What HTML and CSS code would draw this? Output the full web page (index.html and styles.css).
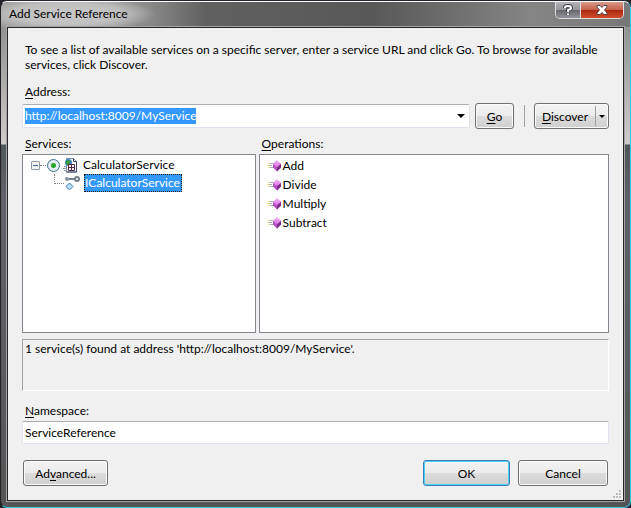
FILE: index.html
```
<!DOCTYPE html>
<html lang="en">
<head>
<meta charset="utf-8">
<title>Add Service Reference</title>
<link rel="stylesheet" href="styles.css">
</head>
<body>
<svg class="defs" aria-hidden="true">
  <defs>
    <linearGradient id="gemTop" x1="0" y1="0" x2="0" y2="1"><stop offset="0" stop-color="#f4b4f8"/><stop offset="1" stop-color="#d66be0"/></linearGradient>
    <symbol id="method" viewBox="0 0 15 12">
      <path d="M2 3.500h4M1 5.500h4M2 7.500h4" stroke="#a9a9b4"/>
      <path d="M1 3.500h2M0 5.500h2M1 7.500h2" stroke="#ece28a"/>
      <path d="M10 0.500L14 4v3.500L10 11.500L6 7.500V4z" fill="#b44fc0"/>
      <path d="M10 0.500L14 4L10 7.500L6 4z" fill="url(#gemTop)"/>
      <path d="M10 7.500L14 4v3.500L10 11.500z" fill="#7c2b88"/>
    </symbol>
  </defs>
</svg>
<main class="window">
  <header class="titlebar">
    <h1 class="title">Add Service Reference</h1>
    <div class="caption-buttons">
      <button class="caption help" aria-label="Help"><svg viewBox="0 0 12 12" width="12" height="12"><path d="M3 4V3.500Q3 2 6 2T9 4Q9 5.500 6 6V8M6 9.500V11" fill="none" stroke="#41434b" stroke-width="4"/><path d="M3 4V3.500Q3 2 6 2T9 4Q9 5.500 6 6V8M6 9.500V11" fill="none" stroke="#fff" stroke-width="2"/></svg></button>
      <button class="caption close" aria-label="Close"><svg viewBox="0 0 12 10" width="12" height="10"><path d="M1 .5h3L6 2.500L8 .5h3V2L8.500 5L11 8v1.500H8L6 7.500L4 9.500H1V8L3.500 5L1 2z" fill="#fff" stroke="#55494d"/></svg></button>
    </div>
  </header>
  <form class="content">
    <p class="intro">To see a list of available services on a specific server, enter a service URL and click Go. To browse for available services, click Discover.</p>
    <label class="label" for="address"><u>A</u>ddress:</label>
    <div class="address-row">
      <div class="combo">
        <input id="address" class="combo-input" type="text" value="http://localhost:8009/MyService" autofocus>
        <button type="button" class="combo-arrow" aria-label="Show addresses"><i class="arrow"></i></button>
      </div>
      <button type="button" class="button go"><span><u>G</u>o</span></button>
      <span class="separator"></span>
      <div class="split">
        <button type="button" class="split-main"><span><u>D</u>iscover</span></button>
        <button type="button" class="split-arrow" aria-label="Discover options"><i class="arrow small"></i></button>
      </div>
    </div>
    <div class="lists">
      <section class="pane">
        <h2 class="label"><span><u>S</u>ervices:</span></h2>
        <div class="box tree">
          <div class="node">
            <button type="button" class="expander" aria-label="Collapse"></button>
            <span class="dots"></span>
            <input class="radio" type="radio" id="calc" name="service" checked>
            <svg class="service-icon" viewBox="0 0 15 15" width="15" height="15">
              <path d="M3.500 .5h7l3 3v10.500h-10z" fill="#fff" stroke="#7d89a8"/>
              <path d="M10.500 .5v3h3M13.500 4v10h-10" fill="none" stroke="#35456f"/>
              <circle cx="5.500" cy="4.500" r="3.500" fill="#4380bd"/>
              <path d="M3 3l3-1 2 2-2 1-1 3-2-2z" fill="#369c3b"/>
              <path d="M5.500 6.500h6v6h-6zM8.500 6.500v6M5.500 9.500h6" fill="#fff" stroke="#5a233e"/>
              <path d="M1 8.500h3M0 10.500h4M1 12.500h3" stroke="#8fa1b5"/>
            </svg>
            <label class="node-text" for="calc">CalculatorService</label>
          </div>
          <div class="node child">
            <span class="elbow"></span>
            <svg class="interface-icon" viewBox="0 0 15 15" width="15" height="15">
              <path d="M2 3h9" stroke="#777f8a" stroke-width="2"/><circle cx="2" cy="3" r="2" fill="#8a929c"/>
              <circle cx="12" cy="3" r="2" fill="#fff" stroke="#777f8a" stroke-width="2"/>
              <path d="M4.500 7L8 10.500L4.500 14L1 10.500z" fill="#b4e0fa" stroke="#3b76ae"/>
            </svg>
            <span class="node-text selected">ICalculatorService</span>
          </div>
        </div>
      </section>
      <section class="pane">
        <h2 class="label"><span><u>O</u>perations:</span></h2>
        <ul class="box operations">
          <li><svg width="15" height="12"><use href="#method"/></svg>Add</li>
          <li><svg width="15" height="12"><use href="#method"/></svg>Divide</li>
          <li><svg width="15" height="12"><use href="#method"/></svg>Multiply</li>
          <li><svg width="15" height="12"><use href="#method"/></svg>Subtract</li>
        </ul>
      </section>
    </div>
    <div class="status" role="status">1 service(s) found at address 'http://localhost:8009/MyService'.</div>
    <label class="label" for="namespace"><u>N</u>amespace:</label>
    <input id="namespace" class="field" type="text" value="ServiceReference">
    <div class="actions">
      <button type="button" class="button advanced"><span>Ad<u>v</u>anced...</span></button>
      <button type="button" class="button ok">OK</button>
      <button type="button" class="button cancel">Cancel</button>
    </div>
    <svg class="grip" viewBox="0 0 8 8" width="8" height="8"><path d="M6 0h2v2H6zM3 3h2v2H3zM6 3h2v2H6zM0 6h2v2H0zM3 6h2v2H3zM6 6h2v2H6z" fill="#bdbdbd"/></svg>
  </form>
</main>
<script src="script.js"></script>
</body>
</html>
```
FILE: styles.css
```
* { box-sizing: border-box; }
body, h1, h2, p, ul { margin: 0; padding: 0; font-size: 12px; font-weight: 400; }
body { background: #23232b; min-height: 100vh; display: flex; }
body, button, input { font-family: Lato, "Open Sans", sans-serif; font-size: 12px; color: #000; }
button, input { margin: 0; padding: 0; outline: 0; }
u { text-decoration: underline; text-underline-offset: 2px; }
.defs { position: absolute; width: 0; height: 0; }

.window {
  flex: 1; display: flex; flex-direction: column;
  margin-top: 1px; padding: 0 6px 6px;
  border: 1px solid #2fc6ec; border-top-color: #fff; border-left-color: #202025;
  border-radius: 7px;
  background: linear-gradient(#888 0, #999 40px, #cfcccb 142px, #50585a 143px, #62616a 200px, #555 100%);
}
.titlebar {
  display: flex; justify-content: space-between; align-items: flex-start;
  height: 25px; margin: 0 -6px; padding: 0 6px 0 8px;
  border-radius: 6px 6px 0 0;
  background:
    radial-gradient(ellipse 90px 18px at 65px 12px, #c8c8c8 0, #c0c0c0 60%, transparent 100%),
    linear-gradient(90deg, #999 0, #999 110px, #888 150px, #606060 205px, #585858 370px, #686868 430px, #858585 530px, #777 100%);
}
.title { line-height: 24px; }
.caption-buttons { display: flex; border: 1px solid #ddd; border-top: 0; border-radius: 0 0 5px 5px; }
.caption { display: flex; align-items: center; justify-content: center; height: 16px; border: 0; }
.help { width: 25px; border-radius: 0 0 0 4px; background: linear-gradient(#b4b4b8 0, #96969b 48%, #66666d 50%, #93939b 100%); border-right: 1px solid #ddd; }
.close { width: 42px; border-radius: 0 0 4px 0; background: linear-gradient(#d99b8b 0, #c6604b 48%, #a92711 50%, #cf4d2a 100%); }

.content {
  position: relative; flex: 1; display: flex; flex-direction: column;
  padding: 14px;
  background: #f0f0f0; border: 1px solid #26262a; outline: 1px solid #a5a5a5;
}
.intro { padding: 0 3px; line-height: 15px; }
.label { display: block; padding-left: 3px; line-height: 16px; }
.intro + .label { margin-top: 12px; }

.address-row { display: flex; align-items: center; margin-top: 3px; }
.combo, .field { border: 1px solid #dfe3ed; border-top-color: #abadb3; border-radius: 2px; background: #fff; }
.combo { flex: 1; min-width: 0; display: flex; height: 24px; }
.combo-input { flex: 1; min-width: 0; border: 0; padding: 0 2px; background: transparent; line-height: 16px; }
::selection { background: #3399ff; color: #fff; }
.combo-arrow { width: 17px; border: 0; background: transparent; display: flex; align-items: center; justify-content: center; }
.arrow { border: 4px solid transparent; border-top-color: #000; border-bottom: 0; }
.arrow.small { border-width: 3px 3px 0; }
.button, .split {
  border: 1px solid #707070; border-radius: 3px;
  background: linear-gradient(#f3f3f3 0, #ebebeb 49%, #dddddd 50%, #cfcfcf 100%);
  box-shadow: inset 0 0 0 1px #fafafa;
}
.button { height: 26px; }
.go { width: 39px; margin-left: 5px; }
.separator { width: 1px; height: 22px; margin: 0 9px 0 10px; background: #a0a0a0; }
.split { display: flex; width: 75px; height: 26px; }
.split-main, .split-arrow { border: 0; background: transparent; }
.split-main { flex: 1; }
.split-arrow { width: 13px; display: flex; align-items: center; justify-content: center; border-left: 1px solid #a0a0a0; margin: 2px 0; }

.lists { flex: 1; display: grid; grid-template-columns: 2fr 3fr; gap: 3px; margin-top: 7px; }
.pane { display: flex; flex-direction: column; min-width: 0; }
.box { flex: 1; margin-top: 2px; border: 1px solid #828790; background: #fff; }
.tree { padding: 1px 0 0 8px; }
.node { display: flex; align-items: center; height: 18px; }
.expander { width: 9px; height: 9px; border: 1px solid #919aa5; border-radius: 1px; background: linear-gradient(#4060a0, #4060a0) center / 5px 1px no-repeat, #f2f2f2; }
.dots { width: 6px; border-top: 1px dotted #808080; }
.radio { appearance: none; width: 13px; height: 13px; margin: 0 3px 0 1px; border: 1px solid #3c7188; border-radius: 50%; background: radial-gradient(circle, #28a528 0, #28a528 2px, #e4edf2 3px); }
.node-text { margin-left: 4px; padding: 0 1px; line-height: 18px; white-space: nowrap; }
.child { padding-left: 23px; }
.elbow { width: 10px; height: 10px; align-self: flex-start; border: 1px dotted #808080; border-width: 0 0 1px 1px; margin-right: 1px; }
.selected { padding: 0 1px 0 0; line-height: 16px; color: #fff; background: #3399ff; border: 1px dotted #33200c; }
.operations { list-style: none; padding: 1px 0 0 7px; }
.operations li { display: flex; align-items: center; gap: 1px; height: 19px; }

.status { height: 52px; margin-top: 6px; padding: 1px 2px; line-height: 16px; border: 1px solid #a0a0a0; border-right-color: #fff; border-bottom-color: #fff; }
.status + .label { margin-top: 12px; }
.field { width: 100%; height: 23px; margin-top: 2px; padding: 0 2px; }
.actions { display: flex; gap: 8px; margin-top: 16px; padding: 0 1px; }
.advanced { width: 85px; margin-right: auto; }
.ok { width: 87px; border-color: #3c7fb1; box-shadow: inset 0 0 0 1px #48d0f8; }
.cancel { width: 90px; }
.grip { position: absolute; right: 2px; bottom: 2px; }
```
FILE: script.js
```
const address = document.getElementById("address");
address.focus();
address.select();
```
